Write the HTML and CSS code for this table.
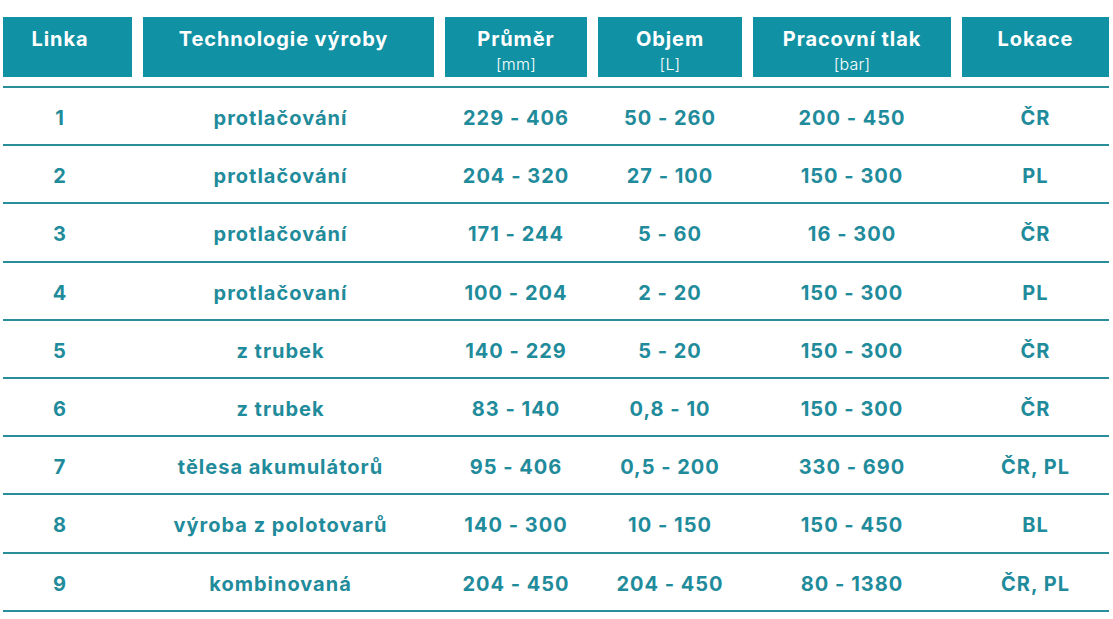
FILE: index.html
```html
<!DOCTYPE html>
<html lang="cs">
<head>
<meta charset="utf-8">
<title>Linky</title>
<link rel="stylesheet" href="styles.css">
</head>
<body>
<div class="table">
  <div class="row head">
    <div class="hcell c1"><span class="title">Linka</span></div>
    <div class="hcell c2"><span class="title">Technologie výroby</span></div>
    <div class="hcell"><span class="title">Průměr</span><span class="unit">[mm]</span></div>
    <div class="hcell"><span class="title">Objem</span><span class="unit">[L]</span></div>
    <div class="hcell"><span class="title">Pracovní tlak</span><span class="unit">[bar]</span></div>
    <div class="hcell"><span class="title">Lokace</span></div>
  </div>
  <div class="body">
    <div class="row data"><div class="cell c1">1</div><div class="cell c2">protlačování</div><div class="cell">229 - 406</div><div class="cell">50 - 260</div><div class="cell">200 - 450</div><div class="cell">ČR</div></div>
    <div class="row data"><div class="cell c1">2</div><div class="cell c2">protlačování</div><div class="cell">204 - 320</div><div class="cell">27 - 100</div><div class="cell">150 - 300</div><div class="cell">PL</div></div>
    <div class="row data"><div class="cell c1">3</div><div class="cell c2">protlačování</div><div class="cell">171 - 244</div><div class="cell">5 - 60</div><div class="cell">16 - 300</div><div class="cell">ČR</div></div>
    <div class="row data"><div class="cell c1">4</div><div class="cell c2">protlačovaní</div><div class="cell">100 - 204</div><div class="cell">2 - 20</div><div class="cell">150 - 300</div><div class="cell">PL</div></div>
    <div class="row data"><div class="cell c1">5</div><div class="cell c2">z trubek</div><div class="cell">140 - 229</div><div class="cell">5 - 20</div><div class="cell">150 - 300</div><div class="cell">ČR</div></div>
    <div class="row data"><div class="cell c1">6</div><div class="cell c2">z trubek</div><div class="cell">83 - 140</div><div class="cell">0,8 - 10</div><div class="cell">150 - 300</div><div class="cell">ČR</div></div>
    <div class="row data"><div class="cell c1">7</div><div class="cell c2">tělesa akumulátorů</div><div class="cell">95 - 406</div><div class="cell">0,5 - 200</div><div class="cell">330 - 690</div><div class="cell">ČR, PL</div></div>
    <div class="row data"><div class="cell c1">8</div><div class="cell c2">výroba z polotovarů</div><div class="cell">140 - 300</div><div class="cell">10 - 150</div><div class="cell">150 - 450</div><div class="cell">BL</div></div>
    <div class="row data"><div class="cell c1">9</div><div class="cell c2">kombinovaná</div><div class="cell">204 - 450</div><div class="cell">204 - 450</div><div class="cell">80 - 1380</div><div class="cell">ČR, PL</div></div>
  </div>
</div>
</body>
</html>
```

FILE: styles.css
```css
* { box-sizing: border-box; }

html, body {
  margin: 0;
  padding: 0;
  background: #ffffff;
}

body {
  font-family: "Inter", "Liberation Sans", sans-serif;
  padding: 17px 0 0 3px;
}

.table {
  width: 1106px;
}

.row {
  display: grid;
  grid-template-columns: 129px 291px 142px 144px 198px 147px;
  column-gap: 11px;
}

.head {
  margin-bottom: 9px;
}

.hcell {
  background: #1191a4;
  color: #ffffff;
  height: 60px;
  padding-top: 10px;
  display: flex;
  flex-direction: column;
  align-items: center;
}

.title {
  font-size: 20px;
  font-weight: 700;
  line-height: 24px;
  letter-spacing: 0.9px;
}

.unit {
  font-size: 16px;
  font-weight: 300;
  line-height: 18px;
  margin-top: 4px;
  letter-spacing: 0.2px;
}

.hcell.c1 { padding-right: 15px; }
.hcell.c2 { padding-right: 10px; }

.body {
  border-top: 2px solid #2a8d9a;
}

.data {
  height: 58.2px;
  border-bottom: 2px solid #2a8d9a;
}

.cell {
  display: flex;
  align-items: center;
  justify-content: center;
  padding-top: 4px;
  color: #1f8b9b;
  font-size: 20px;
  font-weight: 700;
  line-height: 24px;
  letter-spacing: 1px;
}

.cell.c1 { padding-right: 15px; }
.cell.c2 { padding-right: 16px; }
```
